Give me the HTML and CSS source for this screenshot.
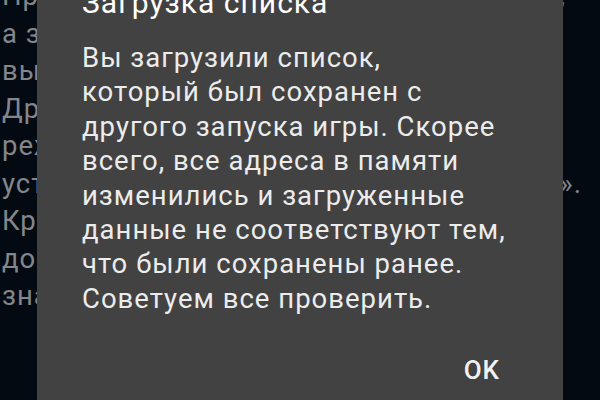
FILE: index.html
```html
<!DOCTYPE html>
<html lang="ru">
<head>
    <meta charset="UTF-8">
    <meta name="viewport" content="width=device-width, initial-scale=1.0">
    <title>Загрузка списка</title>
    <link rel="stylesheet" href="styles.css">
</head>
<body>

<!-- Текст справки под диалогом -->
<div class="page">
    <div class="ln">Прежде чем загружать список<span class="tail">,</span></div>
    <div class="ln">а затем менять значения, сделайте</div>
    <div class="ln">вывод адресов в отдельный файл.</div>
    <div class="ln">Другие игры могут хранить данные</div>
    <div class="ln">реже или в других областях памяти,</div>
    <div class="ln ln-wide">устройства, нажмите «Сохранить<span class="tail">».</span></div>
    <div class="ln">Кроме того, после перезапуска</div>
    <div class="ln">доступ к списку может быть</div>
    <div class="ln">значительно ограничен.</div>
</div>

<!-- Диалог поверх страницы -->
<div class="overlay">
    <div class="dialog">
        <h2 class="dialog-title">Загрузка списка</h2>
        <p class="dialog-message">Вы загрузили список,<br>который был сохранен с другого запуска игры. Скорее всего, все адреса в памяти изменились и загруженные данные не соответствуют тем, что были сохранены ранее. Советуем все проверить.</p>
        <div class="dialog-buttons">
            <button class="dialog-btn">OK</button>
        </div>
    </div>
</div>

</body>
</html>
```

FILE: styles.css
```css
body {
    margin: 0;
    width: 600px;
    height: 400px;
    overflow: hidden;
    background-color: #040a11;
    font-family: Roboto, "Noto Sans", sans-serif;
    position: relative;
}
.page {
    margin-top: -23px;
    padding-left: 2px;
    color: #83868a;
    font-size: 27.5px;
    letter-spacing: 1px;
    line-height: 37.5px;
}
.ln {
    display: flex;
    justify-content: space-between;
    width: 564px;
    white-space: nowrap;
    overflow: hidden;
}
.ln-wide {
    width: 580px;
}
.overlay {
    position: absolute;
    top: 0;
    left: 0;
    right: 0;
    bottom: 0;
    display: flex;
    justify-content: center;
    align-items: flex-start;
}
.dialog {
    width: 526px;
    margin-top: -40px;
    padding: 25px 0 40px;
    background-color: #424242;
}
.dialog-title {
    margin: 0 45px 20px;
    font-size: 30px;
    font-weight: 400;
    letter-spacing: 1px;
    line-height: 36px;
    color: #ffffff;
}
.dialog-message {
    margin: 0 0 0 45px;
    width: 430px;
    font-size: 27.5px;
    letter-spacing: 1px;
    line-height: 34.4px;
    color: #ececec;
}
.dialog-buttons {
    display: flex;
    justify-content: flex-end;
    padding: 27px 47px 0 0;
}
.dialog-btn {
    background: none;
    border: none;
    padding: 12px 16px;
    font-family: Roboto, sans-serif;
    font-size: 26px;
    font-weight: 500;
    letter-spacing: 1px;
    line-height: 30px;
    color: #f2f2f2;
}
```
